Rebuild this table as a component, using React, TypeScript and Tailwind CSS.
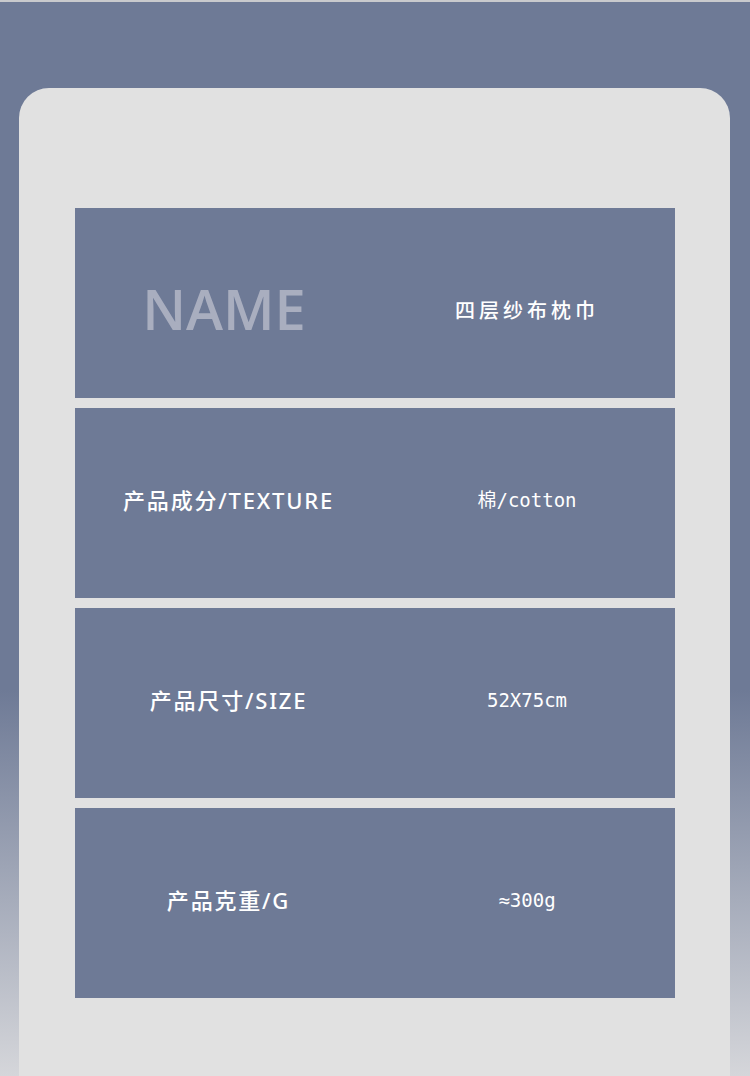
import React from 'react';

const rows = [
  { label: '产品成分/TEXTURE', value: '棉/cotton' },
  { label: '产品尺寸/SIZE', value: '52X75cm' },
  { label: '产品克重/G', value: '≈300g' },
];

const cjk = { fontFamily: '"Noto Sans", "Noto Sans CJK SC", sans-serif' };
const mono = { fontFamily: '"DejaVu Sans Mono", "Noto Sans CJK SC", monospace' };

export default function App() {
  return (
    <div className="w-[750px] h-[1076px] overflow-hidden bg-[linear-gradient(180deg,#6e7a96_0px,#6e7a96_690px,#d5d6da_1076px)]">
      {/* noisy top edge */}
      <div className="h-[2px] bg-[#c9cacd]" />

      <div className="ml-[19px] mt-[86px] w-[711px] h-[1000px] rounded-t-[30px] bg-[#e1e1e1] pt-[120px] pl-[56px] pr-[55px]">
        <div className="flex flex-col gap-[10px]">
          {/* name row */}
          <div className="h-[190px] bg-[#6e7a96] grid grid-cols-2 items-center pt-[12px]">
            <div
              className="text-center text-[56px] font-semibold leading-none text-[#a9aebf] tracking-[0px] -mt-[2px] pr-[2px]"
              style={{ fontFamily: '"Open Sans", sans-serif' }}
            >
              NAME
            </div>
            <div className="text-center text-[20px] font-medium text-white tracking-[4px] pl-[4px] mt-[4px]" style={cjk}>
              四层纱布枕巾
            </div>
          </div>

          {rows.map((r) => (
            <div key={r.label} className="h-[190px] bg-[#6e7a96] grid grid-cols-2 items-center">
              <div className="text-center text-[22px] font-medium text-white tracking-[1.8px] -mt-[6px] pl-[7px]" style={cjk}>
                {r.label}
              </div>
              <div className="text-center text-[19px] text-white -mt-[6px] pl-[4px]" style={mono}>
                {r.value}
              </div>
            </div>
          ))}
        </div>
      </div>
    </div>
  );
}
